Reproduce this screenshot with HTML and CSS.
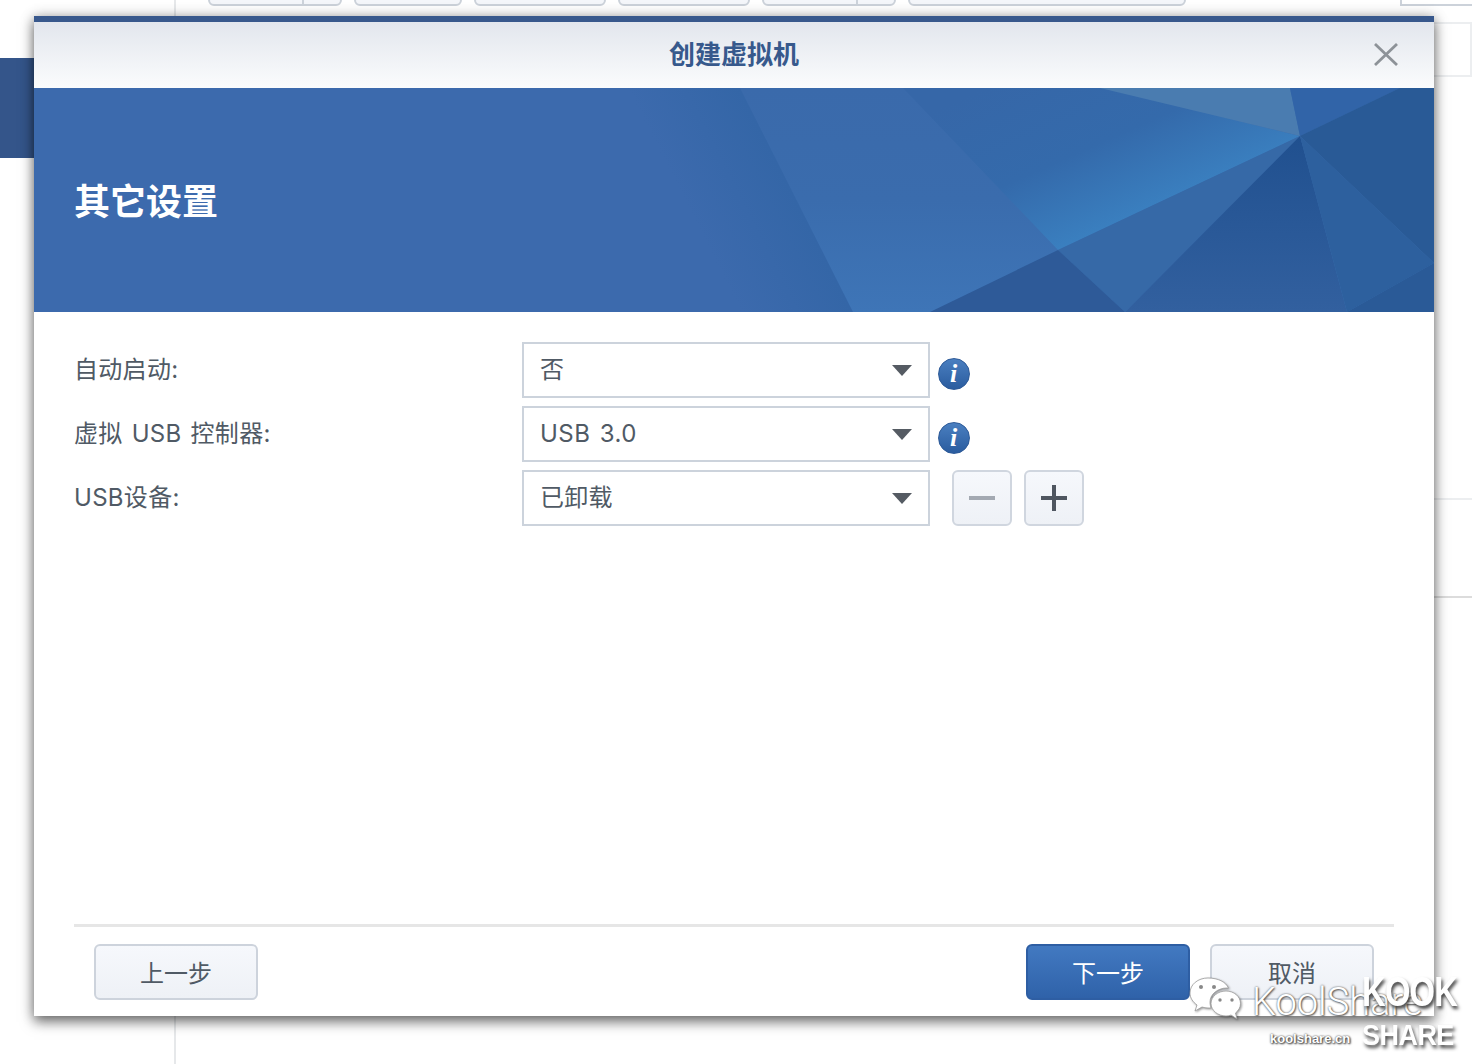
FILE: index.html
```
<!DOCTYPE html>
<html lang="zh-CN">
<head>
<meta charset="utf-8">
<title>创建虚拟机</title>
<link rel="stylesheet" href="styles.css">
</head>
<body>
<div class="app">
  <aside class="sidebar"><div class="side-active"></div></aside>
  <main class="main">
    <div class="toolbar">
      <span class="tb tb-a"><i></i></span>
      <span class="tb tb-b"></span>
      <span class="tb tb-c"></span>
      <span class="tb tb-c"></span>
      <span class="tb tb-a"><i></i></span>
      <span class="tb tb-d"></span>
      <span class="tb tb-e"></span>
    </div>
    <div class="panel">
      <div class="panel-row panel-head"></div>
      <div class="panel-row panel-mid"></div>
      <div class="panel-row panel-low"></div>
    </div>
  </main>
</div>

<section class="dialog">
  <header class="titlebar">
    <h1 class="title">创建虚拟机</h1>
    <svg class="close" width="26" height="24" viewBox="0 0 26 24"><path d="M2 2 L24 23 M24 2 L2 23" stroke="#8d9298" stroke-width="2.800" fill="none"/></svg>
  </header>
  <div class="banner">
    <svg class="banner-art" width="1400" height="224" viewBox="0 0 1400 224" preserveAspectRatio="none">
      <defs>
        <linearGradient id="g1" x1="0" y1="0" x2="0" y2="1">
          <stop offset="0" stop-color="#3a6aab"/><stop offset="0.5" stop-color="#3a6cad"/><stop offset="1" stop-color="#3e75b7"/>
        </linearGradient>
        <linearGradient id="g2" gradientUnits="userSpaceOnUse" x1="950" y1="0" x2="1022" y2="162">
          <stop offset="0" stop-color="#3667a8"/><stop offset="0.55" stop-color="#346aab"/><stop offset="1" stop-color="#3a7fbf"/>
        </linearGradient>
        <linearGradient id="g3" x1="0" y1="0" x2="0" y2="1">
          <stop offset="0" stop-color="#20508f"/><stop offset="1" stop-color="#32609f"/>
        </linearGradient>
        <linearGradient id="g5" gradientUnits="userSpaceOnUse" x1="673" y1="157" x2="762" y2="112">
          <stop offset="0" stop-color="#3c6aad"/><stop offset="1" stop-color="#3466a7"/>
        </linearGradient>
      </defs>
      <polygon points="700,0 1400,0 1400,224 815,224" fill="url(#g1)"/>
      <polygon points="560,0 706,0 819,224 660,224" fill="url(#g5)"/>
      <polygon points="869,0 1070,0 1266,48 1024,162" fill="url(#g2)"/>
      <polygon points="1066,0 1256,0 1266,48" fill="#4a7cb0"/>
      <polygon points="1256,0 1366,0 1266,48" fill="#3164a8"/>
      <polygon points="1366,0 1400,0 1400,175 1266,48" fill="#295a96"/>
      <polygon points="1024,162 1266,48 1091,224" fill="#3669a7"/>
      <polygon points="1024,162 1091,224 896,224" fill="#2e5a98"/>
      <polygon points="1266,48 1313,224 1091,224" fill="url(#g3)"/>
      <polygon points="1266,48 1400,175 1313,224" fill="#2d609e"/>
      <polygon points="1313,224 1400,175 1400,224" fill="#2a5a97"/>
    </svg>
    <h2 class="banner-title">其它设置</h2>
  </div>
  <div class="form">
    <div class="row">
      <label class="label">自动启动:</label>
      <div class="select"><span class="value">否</span><b class="caret"></b></div>
      <span class="info">i</span>
    </div>
    <div class="row">
      <label class="label">虚拟 USB 控制器:</label>
      <div class="select"><span class="value value-latin">USB 3.0</span><b class="caret"></b></div>
      <span class="info">i</span>
    </div>
    <div class="row">
      <label class="label">USB设备:</label>
      <div class="select"><span class="value">已卸载</span><b class="caret"></b></div>
      <div class="stepper">
        <button class="step"><svg width="26" height="4" viewBox="0 0 26 4"><rect width="26" height="4" fill="#a3a9b2"/></svg></button>
        <button class="step"><svg width="26" height="26" viewBox="0 0 26 26"><path d="M13 0V26M0 13H26" stroke="#4f5660" stroke-width="4"/></svg></button>
      </div>
    </div>
  </div>
  <footer class="footer">
    <button class="btn">上一步</button>
    <span class="spacer"></span>
    <button class="btn btn-primary">下一步</button>
    <button class="btn">取消</button>
  </footer>
</section>

<div class="watermark">
  <svg class="wechat" width="52" height="46" viewBox="0 0 52 46">
    <path d="M19 1C9 1 1 7.500 1 16c0 5 3 9 7 12l-2 6 7-4c2 .6 4 1 6 1 1 0 2 0 3-.2C21 28 21 26 21 25c0-8 8-14 17-14 .6 0 1 0 1.500.1C37 5 29 1 19 1Z" fill="#fff" stroke="#9a9a9a" stroke-width=".8"/>
    <path d="M37 14c-8 0-15 5.500-15 12.500S29 39 37 39c2 0 3.500-.4 5-1l6 4-1.500-6c3-2.500 5-5.500 5-9.500C51.500 19.500 45 14 37 14Z" fill="#fff" stroke="#9a9a9a" stroke-width=".8"/>
    <circle cx="12" cy="10" r="2" fill="#888"/><circle cx="25" cy="10" r="2" fill="#888"/>
    <circle cx="31" cy="23" r="1.700" fill="#888"/><circle cx="43" cy="23" r="1.700" fill="#888"/>
  </svg>
  <span class="wm-name">KoolShare</span>
  <span class="wm-kool">KOOK</span>
  <span class="wm-site">koolshare.cn</span>
  <span class="wm-share">SHARE</span>
</div>
</body>
</html>
```
FILE: styles.css
```
* { box-sizing: border-box; }
html, body { margin: 0; height: 1064px; overflow: hidden; background: #fff; }
body {
  position: relative;
  font-family: Inter, "Noto Sans CJK SC", sans-serif;
  color: #505a65;
}

.app { display: flex; height: 1064px; }
.sidebar { width: 176px; border-right: 2px solid #e6e8ea; padding-top: 58px; flex: none; }
.side-active { width: 34px; height: 100px; background: #34558a; }
.main { flex: 1; min-width: 0; display: flex; flex-direction: column; }

.toolbar { display: flex; gap: 12px; height: 6px; padding-left: 32px; align-items: flex-end; position: relative; }
.tb { height: 16px; border: 2px solid #ccd2da; border-radius: 0 0 6px 6px; background: #f4f6fa; display: block; flex: none; position: relative; }
.tb i { position: absolute; right: 36px; top: 0; bottom: 0; width: 2px; background: #ccd2da; }
.tb-a { width: 134px; }
.tb-b { width: 108px; }
.tb-c { width: 132px; }
.tb-d { width: 278px; }
.tb-e { width: 72px; margin-left: 202px; border-radius: 0; background: #fff; border-right: 0; }

.panel { margin-left: auto; width: 38px; margin-top: 16px; display: flex; flex-direction: column; }
.panel-row { border-bottom: 2px solid #eceef0; }
.panel-head { height: 55px; border-top: 2px solid #eceef0; border-right: 2px solid #eceef0; }
.panel-mid { height: 423px; }
.panel-low { height: 98px; border-bottom-color: #dcdcdc; }

.dialog {
  position: absolute; left: 34px; top: 16px; width: 1400px; height: 1000px;
  background: #fff; border-top: 6px solid #38588c;
  display: flex; flex-direction: column;
  box-shadow: 0 6px 12px rgba(0,0,0,.5), 0 0 12px rgba(0,0,0,.25);
}
.titlebar {
  height: 66px; flex: none; position: relative;
  display: flex; align-items: center; justify-content: center;
  background: linear-gradient(#e2e6ed, #fbfcfd);
}
.title { margin: 0; font-size: 26px; font-weight: 700; line-height: 1; color: #37598c; }
.close { position: absolute; right: 35px; top: 20px; }

.banner { height: 224px; flex: none; position: relative; background: #3c6aad; display: flex; align-items: center; padding-left: 40px; overflow: hidden; }
.banner-art { position: absolute; left: 0; top: 0; }
.banner-title { margin: 0; font-size: 36px; font-weight: 700; color: #fff; line-height: 1; position: relative; top: 2px; }

.form { flex: 1; padding: 30px 40px 0; display: flex; flex-direction: column; gap: 8px; }
.row { display: flex; align-items: flex-start; height: 56px; }
.label { width: 448px; flex: none; font-size: 24px; line-height: 56px; height: 56px; word-spacing: 2px; letter-spacing: .3px; }
.select {
  width: 408px; height: 56px; flex: none; border: 2px solid #ccd3dc; background: #fff;
  display: flex; align-items: center; justify-content: space-between;
  padding: 0 16px; font-size: 24px;
}
.value { letter-spacing: .2px; line-height: 48px; height: 48px; }
.value-latin { letter-spacing: .5px; word-spacing: 2px; }
.caret { width: 0; height: 0; border-left: 10px solid transparent; border-right: 10px solid transparent; border-top: 11px solid #555b63; }
.info {
  width: 32px; height: 32px; border-radius: 50%; margin: 16px 0 0 8px; flex: none;
  background: linear-gradient(#4a7fc0, #2a5c9f); border: 1px solid #2d5a98;
  color: #fff; font: italic 700 26px/30px "Liberation Serif", serif; text-align: center; padding-right: 1px;
}
.stepper { display: flex; gap: 12px; margin-left: 22px; }
.step {
  width: 60px; height: 56px; padding: 0; border: 2px solid #d0d6df; border-radius: 6px;
  background: linear-gradient(#f6f8fc, #eef1f6);
  display: flex; align-items: center; justify-content: center;
}

.footer { flex: none; margin: 0 40px; height: 92px; border-top: 3px solid #e6e6e6; padding: 17px 20px 0; display: flex; gap: 20px; align-items: flex-start; }
.spacer { flex: 1; }
.btn {
  width: 164px; height: 56px; padding: 3px 0 0; border: 2px solid #cdd3dc; border-radius: 6px;
  background: linear-gradient(#f6f8fc, #eef1f6);
  font: 24px/1 Inter, "Noto Sans CJK SC", sans-serif; color: #505a65;
}
.btn-primary { border-color: #2e5ea3; background: linear-gradient(#4279c1, #2f62a9); color: #fff; }

.watermark { position: absolute; left: 1180px; top: 960px; width: 292px; height: 104px; color: #fff; pointer-events: none; }
.watermark span { position: absolute; white-space: nowrap; line-height: 1; }
.wechat { position: absolute; left: 9px; top: 17px; filter: drop-shadow(1px 1px 1px rgba(0,0,0,.4)); }
.wm-name { left: 72px; top: 23px; font: 300 38px/1 Roboto, sans-serif; text-shadow: 0 0 2px #555, 1px 1px 2px #555; }
.wm-kool { left: 182px; top: 11px; font: 900 42px/1 "Liberation Sans", sans-serif; text-shadow: 2px 3px 4px #444; letter-spacing: -1px; transform: scaleX(.78); transform-origin: left center; }
.wm-site { left: 90px; top: 72px; font: 700 13px/1 "Liberation Sans", sans-serif; text-shadow: 0 0 2px #333, 1px 1px 2px #333; }
.wm-share { left: 182px; top: 60px; font: 900 30px/1 "Liberation Sans", sans-serif; text-shadow: 2px 3px 4px #444; letter-spacing: -.6px; transform: scaleX(.9); transform-origin: left center; }
```
